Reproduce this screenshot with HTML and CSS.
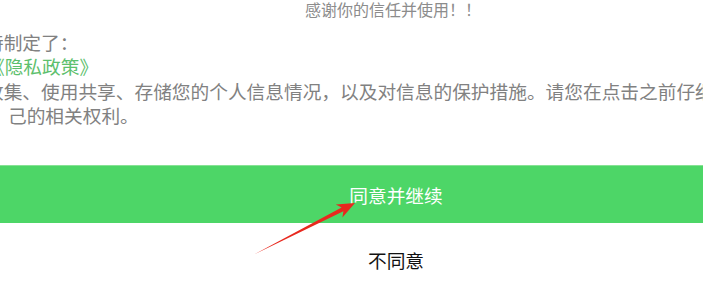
FILE: index.html
```html
<!DOCTYPE html>
<html lang="zh-CN">
<head>
<meta charset="utf-8">
<title>隐私政策</title>
<link rel="stylesheet" href="styles.css">
</head>
<body>
<div class="page">
  <div class="stage">
    <div class="title">感谢你的信任并使用！！</div>
    <div class="content">
      <div class="line">特制定了：</div>
      <div class="line indent link">《隐私政策》</div>
      <div class="line">收集、使用共享、存储您的个人信息情况，以及对信息的保护措施。请您在点击之前仔细阅读，了解自</div>
      <div class="line wrap">己的相关权利。</div>
    </div>
    <div class="agree">同意并继续</div>
    <div class="decline">不同意</div>
  </div>
  <svg class="arrow" width="703" height="292" viewBox="0 0 703 292">
    <polygon points="253,255 341.6,207.6 335.8,204.6 355,203 342.4,217.6 343.4,211.2" fill="#e8281e"/>
  </svg>
</div>
</body>
</html>
```
FILE: styles.css
```css
html, body {
  margin: 0;
  padding: 0;
  background: #ffffff;
}

.page {
  position: relative;
  width: 703px;
  height: 292px;
  overflow: hidden;
  font-family: "Noto Sans CJK SC", "Noto Sans", sans-serif;
}

.stage {
  width: 792px;
  display: flex;
  flex-direction: column;
}

.title {
  font-size: 16px;
  line-height: 18px;
  color: #8c8c8c;
  text-align: center;
  padding-right: 6px;
  white-space: nowrap;
}

.content {
  margin-top: 11.7px;
  margin-left: -15px;
  font-size: 18.7px;
  color: #818181;
}

.line {
  line-height: 24.6px;
  height: 24.6px;
  white-space: nowrap;
}

.indent {
  padding-left: 1px;
}

.wrap {
  padding-left: 23px;
}

.link {
  color: #5dc06d;
}

.agree {
  margin-top: 36.6px;
  height: 58px;
  line-height: 58px;
  background: #4dd667;
  border-top: 1px solid #86e294;
  box-sizing: border-box;
  color: #ffffff;
  font-size: 18.7px;
  text-align: center;
}

.decline {
  margin-top: 8.5px;
  height: 58px;
  line-height: 58px;
  color: #111111;
  font-size: 18.7px;
  text-align: center;
}

.arrow {
  position: absolute;
  left: 0;
  top: 0;
  pointer-events: none;
}
```
